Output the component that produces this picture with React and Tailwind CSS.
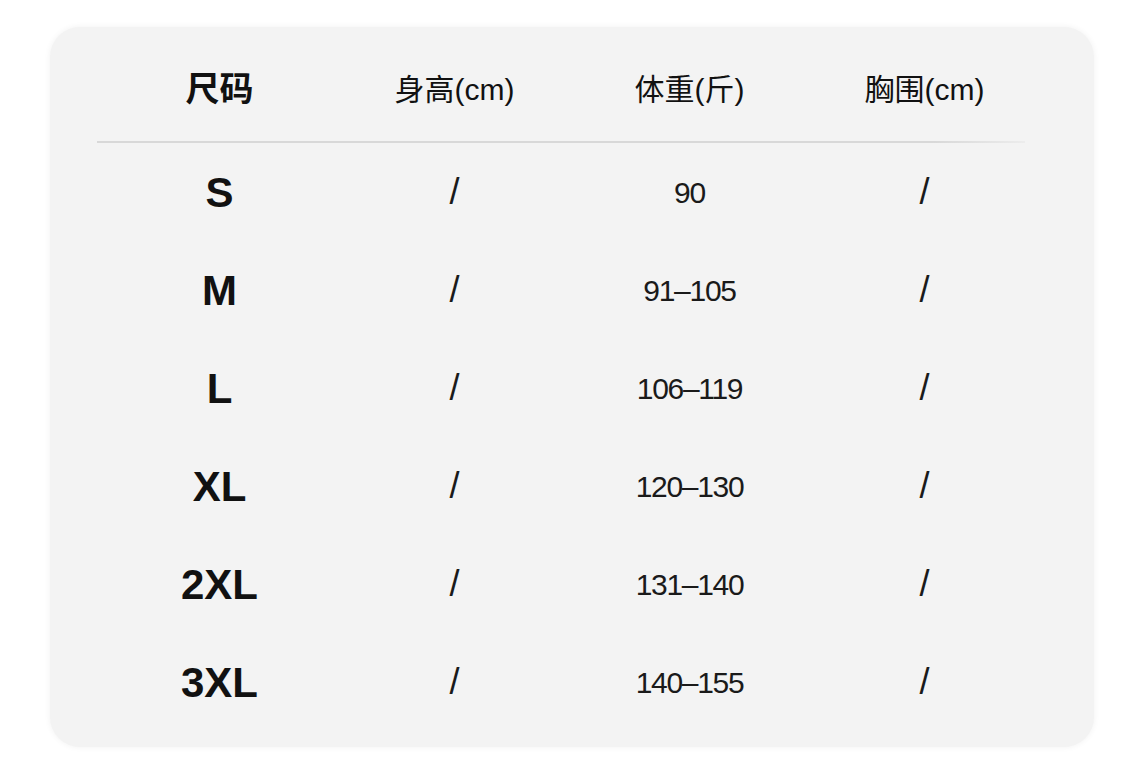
const rows = [
  { size: 'S', weight: '90' },
  { size: 'M', weight: '91–105' },
  { size: 'L', weight: '106–119' },
  { size: 'XL', weight: '120–130' },
  { size: '2XL', weight: '131–140' },
  { size: '3XL', weight: '140–155' },
];

const font = { fontFamily: '"Liberation Sans", "Noto Sans CJK SC", sans-serif' };

export default function App() {
  return (
    <div className="w-[1143px] h-[768px] bg-white pt-[27px] pl-[50px]" style={font}>
      <div className="w-[1044px] h-[720px] bg-[#f3f3f3] rounded-[30px] shadow-[0_0_6px_rgba(0,0,0,0.06)] px-[52px] pt-[34px] text-[#111]">
        {/* header */}
        <div className="grid grid-cols-4 h-[56px] items-center text-center">
          <div className="text-[34px] font-bold">尺码</div>
          <div className="text-[30px]">身高(cm)</div>
          <div className="text-[30px]">体重(斤)</div>
          <div className="text-[30px]">胸围(cm)</div>
        </div>
        <div className="mt-[24px] -ml-[5px] w-[928px] h-[2px] bg-gradient-to-r from-[#d8d8d8] via-[#d8d8d8] via-90% to-[#ececec]" />

        {rows.map((r) => (
          <div key={r.size} className="grid grid-cols-4 h-[98px] items-center text-center">
            <div className="text-[42px] font-bold">{r.size}</div>
            <div className="text-[36px] text-[#1a1a1a]">/</div>
            <div className="text-[30px] tracking-[-1.3px] text-[#1a1a1a]">{r.weight}</div>
            <div className="text-[36px] text-[#1a1a1a]">/</div>
          </div>
        ))}
      </div>
    </div>
  );
}
